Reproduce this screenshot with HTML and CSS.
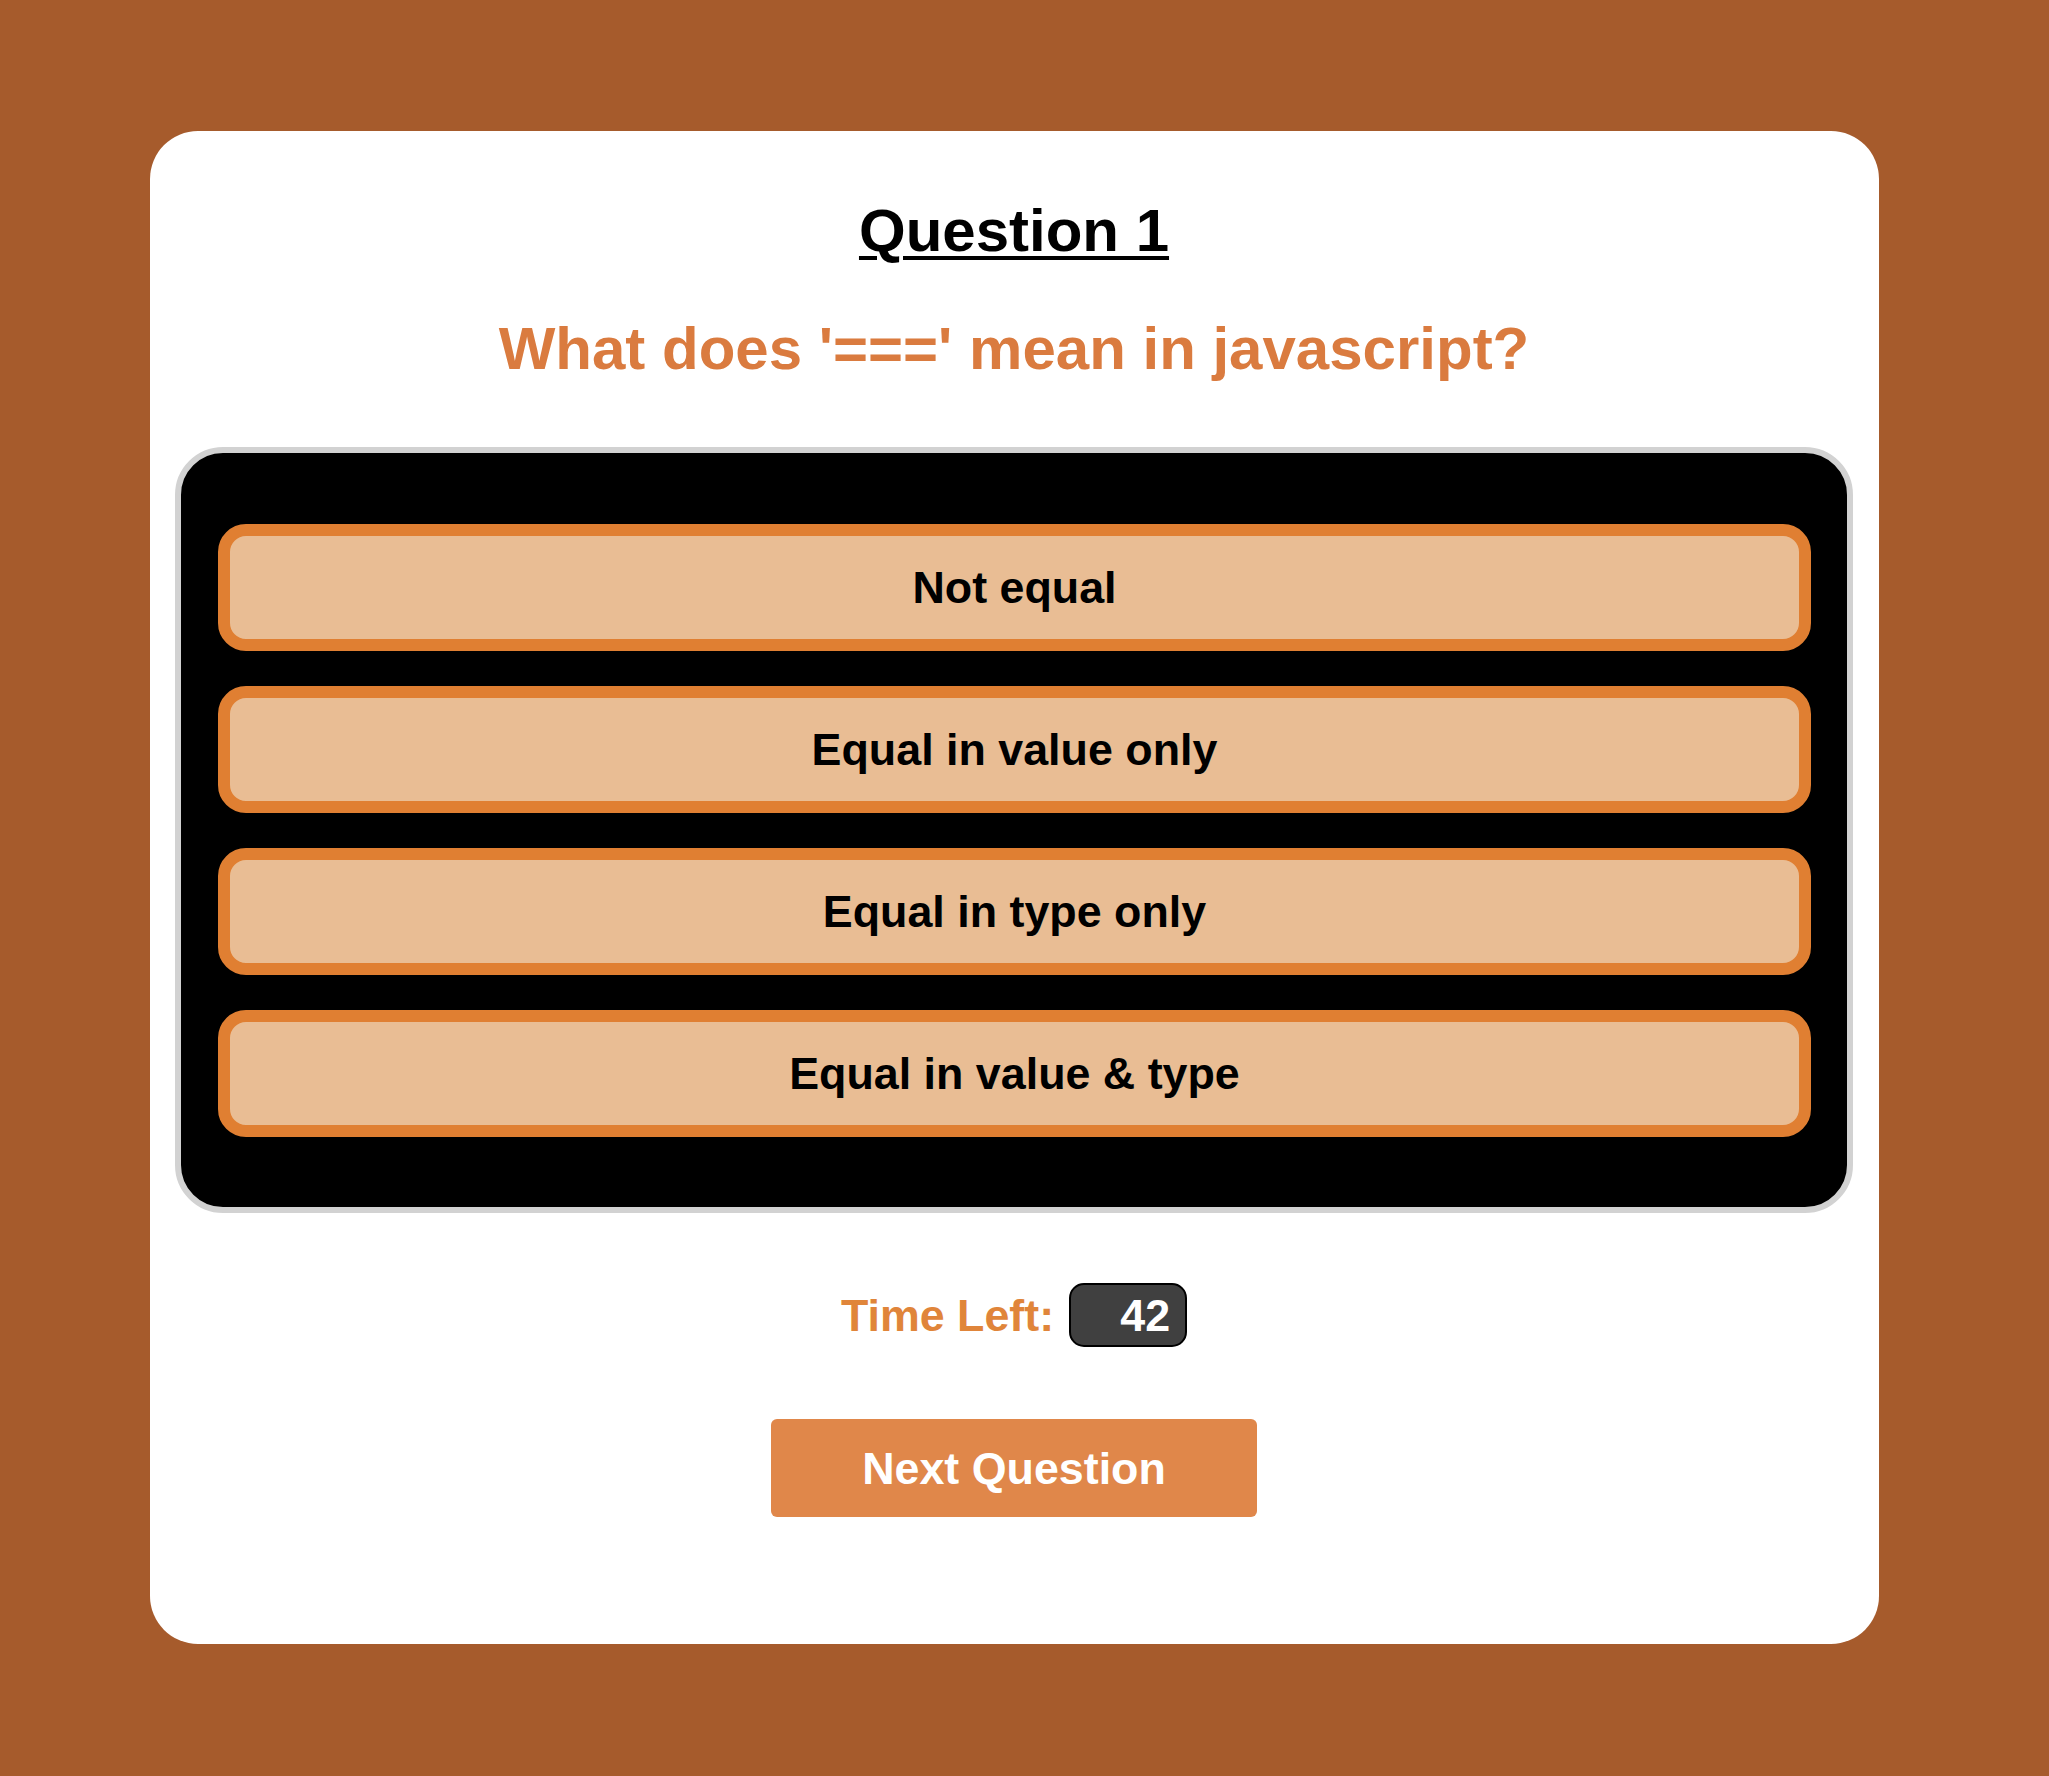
FILE: index.html
```html
<!DOCTYPE html>
<html lang="en">
<head>
<meta charset="utf-8">
<title>Quiz</title>
<link rel="stylesheet" href="styles.css">
</head>
<body>
<div class="card">
  <h1 class="title">Question 1</h1>
  <h2 class="question">What does '===' mean in javascript?</h2>
  <div class="answers">
    <button class="option">Not equal</button>
    <button class="option">Equal in value only</button>
    <button class="option">Equal in type only</button>
    <button class="option">Equal in value &amp; type</button>
  </div>
  <div class="timer-row">
    <span class="timer-label">Time Left:</span>
    <span class="timer">42</span>
  </div>
  <button class="next">Next Question</button>
</div>
</body>
</html>
```
FILE: styles.css
```css
html, body {
  margin: 0;
  padding: 0;
}
body {
  background: #a65b2c;
  padding: 131px 170px 132px 150px;
  font-family: "Liberation Sans", Arial, sans-serif;
}
.card {
  background: #ffffff;
  border-radius: 48px;
  padding: 0 26px 127px 25px;
  display: flex;
  flex-direction: column;
  align-items: center;
}
.title {
  margin: 65px 0 0;
  font-size: 60px;
  line-height: 70px;
  font-weight: bold;
  color: #000;
  text-decoration: underline;
  text-decoration-thickness: 4px;
  text-underline-offset: 5px;
}
.question {
  margin: 48px 0 0;
  font-size: 60px;
  line-height: 70px;
  font-weight: bold;
  color: #da7b3f;
}
.answers {
  margin-top: 63px;
  align-self: stretch;
  box-sizing: border-box;
  height: 766px;
  background: #000;
  border: 6px solid #d2d2d2;
  border-radius: 48px;
  padding: 71px 36px 70px 37px;
  display: flex;
  flex-direction: column;
  gap: 35px;
}
.option {
  box-sizing: border-box;
  height: 127px;
  width: 100%;
  border: 12px solid #e07f32;
  border-radius: 28px;
  background: #e9bd94;
  font-family: inherit;
  font-size: 44.8px;
  font-weight: bold;
  color: #000;
  padding: 0;
  cursor: pointer;
}
.timer-row {
  margin-top: 70px;
  display: flex;
  align-items: baseline;
  gap: 15px;
}
.timer-label {
  font-size: 44.8px;
  font-weight: bold;
  color: #e0853a;
}
.timer {
  box-sizing: border-box;
  display: inline-block;
  width: 118px;
  height: 64px;
  line-height: 60px;
  border: 2px solid #000;
  border-radius: 15px;
  background: #404040;
  color: #fff;
  font-size: 44.8px;
  font-weight: bold;
  text-align: right;
  padding-right: 15px;
}
.next {
  margin-top: 72px;
  width: 486px;
  height: 98px;
  border: none;
  border-radius: 6px;
  background: #e0874a;
  color: #fff;
  font-family: inherit;
  font-size: 44.8px;
  font-weight: bold;
  padding: 0;
  cursor: pointer;
}
```
